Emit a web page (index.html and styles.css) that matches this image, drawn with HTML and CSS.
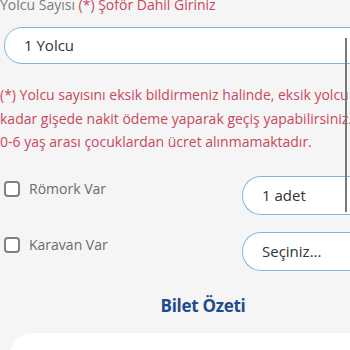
FILE: index.html
```html
<!DOCTYPE html>
<html lang="tr">
<head>
  <meta charset="UTF-8" />
  <meta name="viewport" content="width=device-width, initial-scale=1.0"/>
  <title>Bilet</title>
  <link rel="stylesheet" href="styles.css">
</head>
<body>
  <div class="page">
    <!-- Yolcu sayısı -->
    <div class="field-label">Yolcu Sayısı <span class="req">(*) Şoför Dahil Giriniz</span></div>
    <div class="input">1 Yolcu</div>

    <p class="note">
      (*) Yolcu sayısını eksik bildirmeniz halinde, eksik yolcu<br>
      kadar gişede nakit ödeme yaparak geçiş yapabilirsiniz.<br>
      0-6 yaş arası çocuklardan ücret alınmamaktadır.
    </p>

    <!-- Ek araçlar -->
    <div class="row">
      <label class="check"><span class="box"></span>Römork Var</label>
      <div class="select">1 adet</div>
    </div>
    <div class="row">
      <label class="check"><span class="box"></span>Karavan Var</label>
      <div class="select">Seçiniz...</div>
    </div>

    <h2 class="title">Bilet Özeti</h2>
    <div class="card"></div>
  </div>

  <div class="scroll-thumb"></div>
</body>
</html>
```

FILE: styles.css
```css
/* Reset básico */
* {
  margin: 0;
  padding: 0;
  box-sizing: border-box;
}

body {
  font-family: "Open Sans", Arial, sans-serif;
  background: #f5f5f5;
  overflow: hidden;
  height: 350px;
}

.page {
  width: 406px;
  margin-top: -5px;
}

.field-label {
  font-size: 14px;
  line-height: 20px;
  color: #7a7a7a;
}

.req {
  color: #c9485b;
}

.input {
  margin: 12px 0 0 4px;
  height: 37px;
  width: 400px;
  padding-left: 19px;
  border: 1px solid #7db6df;
  border-radius: 18px;
  background: #fff;
  font-size: 15px;
  line-height: 35px;
  color: #333;
}

.note {
  margin-top: 19px;
  font-size: 14px;
  line-height: 23.5px;
  color: #c9485b;
}

.row {
  display: flex;
  justify-content: space-between;
  margin-top: 22px;
}

.row + .row {
  margin-top: 17px;
}

.check {
  display: flex;
  align-items: center;
  gap: 9px;
  padding: 4px 0 0 4px;
  height: 20px;
  font-size: 14px;
  color: #6b6b6b;
  margin-top: 1px;
}

.box {
  width: 16px;
  height: 16px;
  border: 2px solid #808080;
  border-radius: 4px;
  background: #fff;
}

.select {
  width: 164px;
  height: 39px;
  padding-left: 19px;
  border: 1px solid #7db6df;
  border-radius: 19px 0 0 19px;
  border-right: none;
  background: #fff;
  font-size: 15px;
  line-height: 37px;
  color: #333;
}

.title {
  margin-top: 23px;
  text-align: center;
  font-size: 17px;
  line-height: 24px;
  color: #1e4b8f;
  letter-spacing: -0.3px;
}

.card {
  margin: 15px 0 0 10px;
  height: 80px;
  background: #fff;
  border-radius: 22px;
}

.scroll-thumb {
  position: absolute;
  left: 345px;
  top: 38px;
  width: 2px;
  height: 174px;
  background: #777;
}
```
